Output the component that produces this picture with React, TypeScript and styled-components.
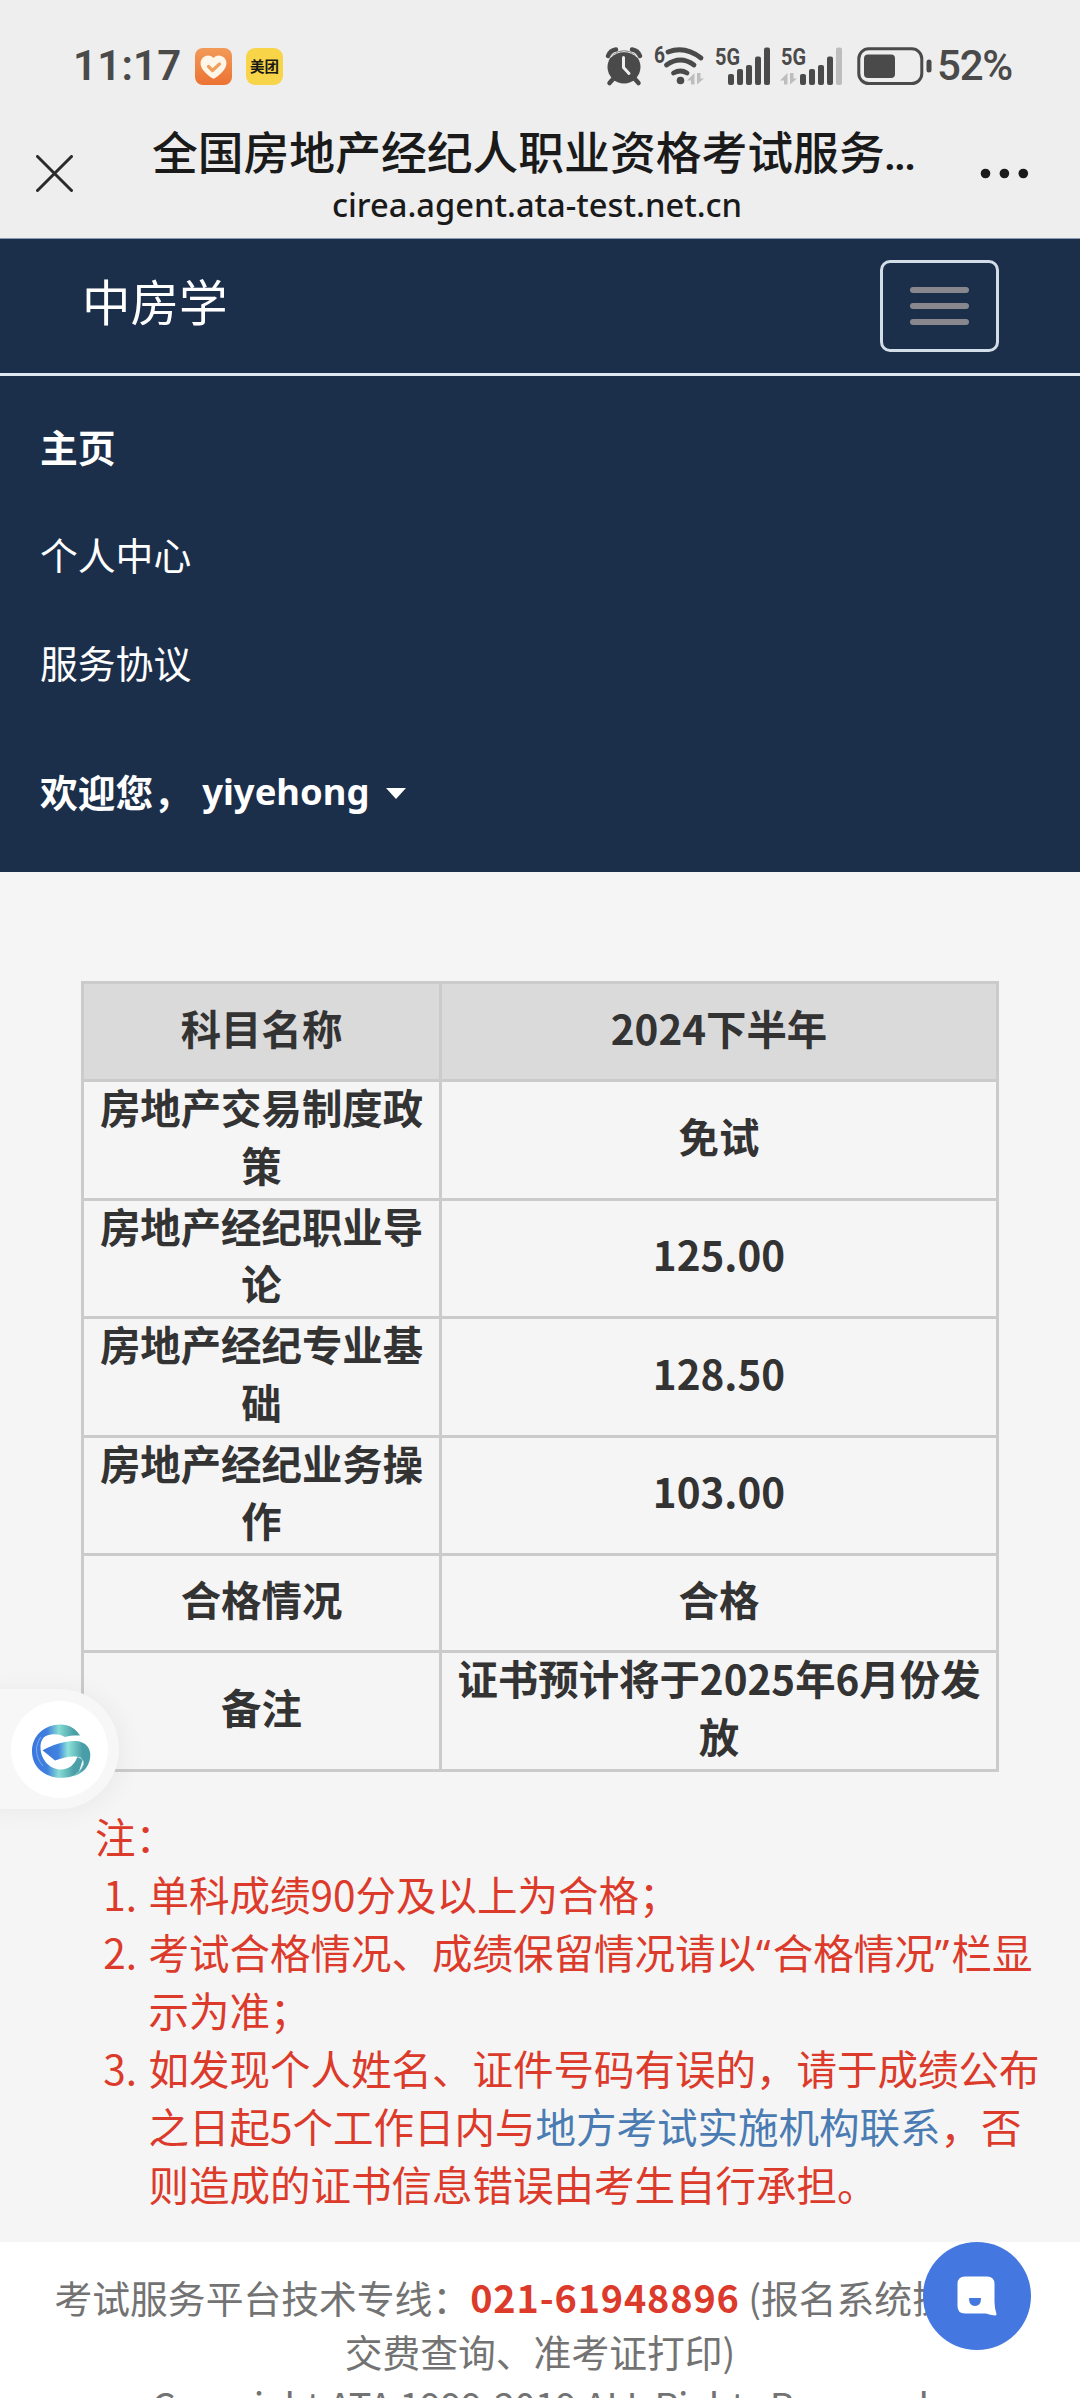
import React from "react";
import styled, { createGlobalStyle } from "styled-components";

const ink = "#4a4a4a";
const faint = "#bdbdbd";
const navy = "#1b2e4a";
const line = "#cbcbcb";
const red = "#dc3a2a";

const GlobalStyle = createGlobalStyle`
  html, body { margin: 0; padding: 0; background: #ffffff; }
  *, *::before, *::after { box-sizing: border-box; }
  body { overflow: hidden; }
`;

const Screen = styled.div`
  position: relative;
  width: 1080px;
  height: 2398px;
  overflow: hidden;
  display: flex;
  flex-direction: column;
  background: #f5f5f5;
  font-family: "Noto Sans CJK SC", "Noto Sans", sans-serif;
  color: #333333;
`;

const StatusBar = styled.div`
  flex: none;
  display: flex;
  align-items: center;
  height: 132px;
  padding: 0 66px 0 73px;
  background: #eeeeee;
  color: ${ink};
`;

const Clock = styled.span`
  width: 122px;
  font-family: Roboto, sans-serif;
  font-size: 42px;
  font-weight: 600;
  line-height: 60px;
  letter-spacing: 0.2px;
  white-space: nowrap;
`;

const NoticeIcons = styled.div`
  display: flex;
  gap: 14px;
  flex: 1;
`;

const Meituan = styled.span`
  width: 37px;
  height: 37px;
  border-radius: 9px;
  background: #f7d448;
  color: #1a1a14;
  font-size: 14.5px;
  font-weight: 700;
  line-height: 35px;
  text-align: center;
  white-space: nowrap;
`;

const Indicators = styled.div`
  display: flex;
  align-items: center;
`;

const IndicatorSvg = styled.svg<{ $gap?: number }>`
  display: block;
  flex: none;
  overflow: visible;
  margin-right: ${(p) => p.$gap ?? 0}px;
`;

const SmallLabel = styled.text`
  font-family: Roboto, sans-serif;
  font-weight: 700;
  fill: ${ink};
`;

const Battery = styled.span`
  width: 77px;
  font-family: Roboto, sans-serif;
  font-size: 42px;
  font-weight: 500;
  line-height: 60px;
  letter-spacing: -1.2px;
  white-space: nowrap;
`;

const TitleBar = styled.header`
  flex: none;
  display: flex;
  height: 107px;
  padding: 0 51px 0 36px;
  background: #eeeeee;
  border-bottom: 1px solid #8b9ab3;
`;

const BarButton = styled.button`
  flex: none;
  display: block;
  height: 37px;
  margin: 23px 0 0;
  padding: 0;
  border: 0;
  background: none;
`;

const Titles = styled.div`
  flex: 1;
  display: flex;
  flex-direction: column;
  align-items: center;
  padding-left: 14px;
  color: #1a1a1a;
  white-space: nowrap;
`;

const PageTitle = styled.h1`
  margin: -15px 0 0;
  font-size: 45.8px;
  font-weight: 500;
  line-height: 66px;
`;

const Ellipsis = styled.span`
  font-family: "Noto Sans", sans-serif;
  font-size: 36px;
  font-weight: 700;
`;

const PageUrl = styled.div`
  margin: -7px 0 0 7px;
  font-family: "Noto Sans", sans-serif;
  font-size: 32.7px;
  font-weight: 500;
  line-height: 44px;
`;

const NavHead = styled.div`
  flex: none;
  display: flex;
  align-items: center;
  justify-content: space-between;
  height: 137px;
  padding: 0 81px 0 82px;
  background: ${navy};
  border-bottom: 3px solid #dfe8ee;
`;

const Brand = styled.div`
  font-size: 48.5px;
  line-height: 60px;
  color: #ffffff;
  margin-top: -12px;
`;

const Toggle = styled.button`
  display: flex;
  flex-direction: column;
  align-items: center;
  justify-content: center;
  gap: 10px;
  width: 119px;
  height: 92px;
  padding: 0;
  border: 3px solid #d3dde7;
  border-radius: 10px;
  background: transparent;
`;

const ToggleBar = styled.span`
  width: 59px;
  height: 6px;
  border-radius: 3px;
  background: #88878e;
`;

const Menu = styled.nav`
  flex: none;
  display: flex;
  flex-direction: column;
  height: 496px;
  padding: 42px 40px 0;
  background: ${navy};
  color: #ffffff;
`;

const MenuItem = styled.a<{ $strong?: boolean; $top?: number }>`
  display: flex;
  align-items: center;
  height: 56px;
  margin: ${(p) => p.$top ?? 0}px 0 0;
  font-size: 37.8px;
  font-weight: ${(p) => (p.$strong ? 700 : 400)};
  line-height: 56px;
  white-space: pre;
`;

const UserName = styled.span`
  margin-left: 11px;
  width: 184px;
  font-family: "Noto Sans", sans-serif;
  font-size: 36.4px;
`;

const Caret = styled.span`
  border: 10.5px solid transparent;
  border-top: 11px solid #ffffff;
  border-bottom: 0;
  margin-top: 5px;
`;

const Content = styled.main`
  flex: none;
  height: 1370px;
  padding: 109px 0 0 81px;
`;

const ScoreTable = styled.table`
  width: 918px;
  border-collapse: collapse;
  table-layout: fixed;
  font-size: 40.4px;
  font-weight: 700;
  line-height: 57.7px;
  text-align: center;
`;

const Row = styled.tr<{ $h: number; $head?: boolean }>`
  height: ${(p) => p.$h}px;
  background: ${(p) => (p.$head ? "#dadada" : "transparent")};
`;

const Cell = styled.td<{ $w?: number }>`
  ${(p) => (p.$w ? `width: ${p.$w}px;` : "")}
  padding: 0;
  border: 3px solid ${line};
  vertical-align: middle;
`;

const CellText = styled.div`
  margin: -4px 0 4px;
`;

const Notes = styled.section`
  padding: 35px 0 0 14px;
  color: ${red};
  font-size: 40.5px;
  line-height: 58px;
`;

const NoteRow = styled.div`
  display: flex;
  white-space: nowrap;
`;

const NoteNumber = styled.span`
  width: 42px;
  margin-right: 11.5px;
  text-align: right;
`;

const NoteBody = styled.div`
  display: flex;
  flex-direction: column;
`;

const Quote = styled.span`
  font-family: "Noto Sans", sans-serif;
  line-height: 0;
  letter-spacing: 2.2px;
`;

const NoteLink = styled.a`
  color: #4a7cb3;
`;

const Footer = styled.footer`
  flex: 1;
  min-height: 0;
  padding-top: 28px;
  background: #ffffff;
  color: #737373;
  font-size: 37.8px;
  line-height: 54px;
  text-align: center;
  white-space: nowrap;
  overflow: hidden;
`;

const Hotline = styled.strong`
  color: ${red};
  font-weight: 700;
  letter-spacing: 0.85px;
`;

const Copyright = styled.div`
  letter-spacing: -0.5px;
`;

const Dock = styled.div`
  position: absolute;
  left: -20px;
  top: 1689px;
  width: 139px;
  height: 120px;
  border-radius: 0 60px 60px 0;
  background: #f7f7f7;
  box-shadow: 4px 2px 26px rgba(0, 0, 0, 0.05);
  display: flex;
  align-items: center;
  justify-content: flex-end;
  padding-right: 11px;
`;

const DockDisc = styled.div`
  width: 97px;
  height: 97px;
  border-radius: 50%;
  background: #ffffff;
  display: flex;
  align-items: center;
  justify-content: center;
  padding: 3px 0 0 2px;
`;

const ChatButton = styled.button`
  position: absolute;
  left: 923px;
  top: 2242px;
  width: 108px;
  height: 108px;
  padding: 0;
  border: 0;
  border-radius: 50%;
  background: #4478e0;
`;

const HeartIcon = () => (
  <svg width="37" height="37" viewBox="0 0 37 37">
    <defs>
      <linearGradient id="heartBg" x1="0" y1="0" x2="0" y2="1">
        <stop offset="0" stopColor="#f29a58" />
        <stop offset="1" stopColor="#ec7233" />
      </linearGradient>
    </defs>
    <rect width="37" height="37" rx="8" fill="url(#heartBg)" />
    <path
      d="M18.500 10 C15.500 6.500 10.500 6.800 7.500 10 C4.500 13.500 5.200 18.500 8.500 22.500 C11.500 26 14.500 28.500 17 30 Q18.500 31 20 30 C22.500 28.500 25.500 26 28.500 22.500 C31.800 18.500 32.500 13.500 29.500 10 C26.500 6.800 21.500 6.500 18.500 10 Z"
      fill="#fff6ea"
    />
    <path d="M13.500 18.500 L17.500 22.500 L24.500 16" fill="none" stroke="#f0a05e" strokeWidth="3.200" strokeLinecap="round" strokeLinejoin="round" />
  </svg>
);

const AlarmIcon = () => (
  <IndicatorSvg $gap={12} width="36" height="38" viewBox="0 0 36 38">
    <circle cx="18" cy="20" r="16.500" fill={ink} />
    <path d="M2 9 Q4 3.500 10 2.500 M34 9 Q32 3.500 26 2.500" fill="none" stroke={ink} strokeWidth="4.500" strokeLinecap="round" />
    <path d="M4.500 10.500 A18.500 18.500 0 0 1 31.500 10.500" fill="none" stroke="#eeeeee" strokeWidth="1" />
    <path d="M7.500 31.500 L3.500 36 M28.500 31.500 L32.500 36" stroke={ink} strokeWidth="4.500" strokeLinecap="round" />
    <path d="M17.500 10.500 V20.500 L23 26.500" fill="none" stroke="#eeeeee" strokeWidth="3" strokeLinecap="round" strokeLinejoin="round" />
  </IndicatorSvg>
);

const DataArrows = ({ x, y }: { x: number; y: number }) => (
  <path
    transform={`translate(${x} ${y})`}
    d="M7.500 0 V11.500 H4 V7.500 H0 Z M10 0 V11.500 L17 5.500 H13.500 V0 Z"
    fill={faint}
  />
);

const WifiIcon = () => (
  <IndicatorSvg $gap={11} width="50" height="38" viewBox="0 0 50 38">
    <SmallLabel x="0" y="15.500" fontSize="23" textLength="11" lengthAdjust="spacingAndGlyphs">6</SmallLabel>
    <g fill="none" stroke={ink} strokeWidth="4.800" strokeLinecap="round">
      <path d="M14 5 Q31 -1.500 47 11" />
      <path d="M12.500 18 Q26.500 8 40 18" />
      <path d="M19.500 26 Q26.500 22 33 26" />
    </g>
    <circle cx="26.500" cy="33.500" r="3.800" fill={ink} />
    <DataArrows x={33} y={26} />
  </IndicatorSvg>
);

const SignalIcon = ({ shift, weak, gap }: { shift: number; weak?: boolean; gap: number }) => (
  <IndicatorSvg $gap={gap} width={56 + shift} height="38" viewBox={`0 0 ${56 + shift} 38`}>
    <SmallLabel x="0" y="17.500" fontSize="24" textLength="25" lengthAdjust="spacingAndGlyphs">5G</SmallLabel>
    {weak && <DataArrows x={-1} y={26} />}
    {[27, 22, 18, 9.5, 0.5].map((top, i) => (
      <rect key={top} x={13 + shift + i * 9} y={top} width="6" height={38 - top} rx="2" fill={weak && i === 4 ? faint : ink} />
    ))}
  </IndicatorSvg>
);

const BatteryIcon = () => (
  <IndicatorSvg $gap={5} width="75" height="38" viewBox="0 0 75 38">
    <rect x="1.800" y="1.800" width="63" height="34.800" rx="10" fill="none" stroke={ink} strokeWidth="3" />
    <rect x="7" y="7.500" width="31" height="23.500" rx="4" fill={ink} />
    <rect x="69.500" y="12.500" width="5" height="13" rx="2.500" fill={ink} />
  </IndicatorSvg>
);

const GLogo = () => (
  <svg width="60" height="56" viewBox="0 0 60 56">
    <defs>
      <linearGradient id="gRing" gradientUnits="userSpaceOnUse" x1="1" y1="0" x2="59" y2="0">
        <stop offset="0" stopColor="#3b76df" />
        <stop offset="0.260" stopColor="#3f80de" />
        <stop offset="0.460" stopColor="#86dcd4" />
        <stop offset="0.720" stopColor="#4b9fa8" />
        <stop offset="1" stopColor="#4a9fa9" />
      </linearGradient>
      <linearGradient id="gBand" gradientUnits="userSpaceOnUse" x1="11" y1="0" x2="59" y2="0">
        <stop offset="0" stopColor="#3b70dc" />
        <stop offset="0.340" stopColor="#3f84df" />
        <stop offset="0.540" stopColor="#8fe3db" />
        <stop offset="0.850" stopColor="#489da7" />
      </linearGradient>
    </defs>
    <path
      d="M49 12.500 C44 5 38 1.500 29.500 1.500 C13 1.500 1 13 1 28.500 C1 44 14 54.800 29.700 54.800 C37 54.800 43 53.500 47.500 50 L52 36 L46.300 34 C44 41 38 46.500 30 46.500 C19 46.500 9.500 37 9.500 24 C9.500 17 13 12 20 11.500 C26 11 29 11.500 34 14 C39 12.500 44 12.200 49 12.500 Z"
      fill="url(#gRing)"
    />
    <path
      d="M11.500 27.300 C19 23.500 27 20 34 19 C40 18 46 17.500 50 19 C56 21 59.300 26 59.300 32 C59.300 42 53 50 43 53 C49 48 53 43 52.500 39 C52 34.500 48 33.500 43 33.500 C36 33.500 30 35.500 24 37.500 Z"
      fill="url(#gBand)"
    />
    <path d="M46 34 C55 36 55 44 43 53" fill="none" stroke="#8fd6d3" strokeWidth="0.800" />
    <path d="M10 14 C3.500 22 4 34 12 43" fill="none" stroke="#9cc4f0" strokeWidth="0.700" />
  </svg>
);

const scores: [string[], string[], number][] = [
  [["房地产交易制度政", "策"], ["免试"], 118.5],
  [["房地产经纪职业导", "论"], ["125.00"], 118.5],
  [["房地产经纪专业基", "础"], ["128.50"], 118.5],
  [["房地产经纪业务操", "作"], ["103.00"], 118.5],
  [["合格情况"], ["合格"], 97],
  [["备注"], ["证书预计将于2025年6月份发", "放"], 118.5],
];

const Lines = ({ of }: { of: string[] }) => (
  <CellText>
    {of.map((t) => (
      <div key={t}>{t}</div>
    ))}
  </CellText>
);

export default function App() {
  return (
    <Screen lang="zh-CN">
      <GlobalStyle />
      <StatusBar>
        <Clock>11:17</Clock>
        <NoticeIcons>
          <HeartIcon />
          <Meituan>美团</Meituan>
        </NoticeIcons>
        <Indicators>
          <AlarmIcon />
          <WifiIcon />
          <SignalIcon shift={0} gap={10} />
          <SignalIcon shift={6} weak gap={14} />
          <BatteryIcon />
          <Battery>52%</Battery>
        </Indicators>
      </StatusBar>
      <TitleBar>
        <BarButton aria-label="关闭">
          <svg width="37" height="37" viewBox="0 0 37 37">
            <path d="M1.500 1.500 L35.500 35.500 M35.500 1.500 L1.500 35.500" stroke="#2a2a2a" strokeWidth="3" strokeLinecap="round" />
          </svg>
        </BarButton>
        <Titles>
          <PageTitle>
            全国房地产经纪人职业资格考试服务<Ellipsis>...</Ellipsis>
          </PageTitle>
          <PageUrl>cirea.agent.ata-test.net.cn</PageUrl>
        </Titles>
        <BarButton aria-label="更多">
          <svg width="49" height="37" viewBox="0 0 49 37">
            <circle cx="5.500" cy="18.500" r="4.800" fill="#1a1a1a" />
            <circle cx="24.400" cy="18.500" r="4.800" fill="#1a1a1a" />
            <circle cx="43.300" cy="18.500" r="4.800" fill="#1a1a1a" />
          </svg>
        </BarButton>
      </TitleBar>
      <NavHead>
        <Brand>中房学</Brand>
        <Toggle aria-label="菜单">
          <ToggleBar />
          <ToggleBar />
          <ToggleBar />
        </Toggle>
      </NavHead>
      <Menu>
        <MenuItem $strong>主页</MenuItem>
        <MenuItem $top={51.5}>个人中心</MenuItem>
        <MenuItem $top={52}>服务协议</MenuItem>
        <MenuItem $strong $top={73.5}>
          欢迎您，<UserName>yiyehong</UserName>
          <Caret />
        </MenuItem>
      </Menu>
      <Content>
        <ScoreTable>
          <tbody>
            <Row $h={98} $head>
              <Cell $w={358}>
                <Lines of={["科目名称"]} />
              </Cell>
              <Cell>
                <Lines of={["2024下半年"]} />
              </Cell>
            </Row>
            {scores.map(([name, value, h]) => (
              <Row key={name[0]} $h={h}>
                <Cell>
                  <Lines of={name} />
                </Cell>
                <Cell>
                  <Lines of={value} />
                </Cell>
              </Row>
            ))}
          </tbody>
        </ScoreTable>
        <Notes>
          <div>注：</div>
          <NoteRow>
            <NoteNumber>1.</NoteNumber>
            <NoteBody>
              <div>单科成绩90分及以上为合格；</div>
            </NoteBody>
          </NoteRow>
          <NoteRow>
            <NoteNumber>2.</NoteNumber>
            <NoteBody>
              <div>
                考试合格情况、成绩保留情况请以<Quote>“</Quote>合格情况<Quote>”</Quote>栏显
              </div>
              <div>示为准；</div>
            </NoteBody>
          </NoteRow>
          <NoteRow>
            <NoteNumber>3.</NoteNumber>
            <NoteBody>
              <div>如发现个人姓名、证件号码有误的，请于成绩公布</div>
              <div>
                之日起5个工作日内与<NoteLink>地方考试实施机构联系</NoteLink>，否
              </div>
              <div>则造成的证书信息错误由考生自行承担。</div>
            </NoteBody>
          </NoteRow>
        </Notes>
      </Content>
      <Footer>
        <div>
          考试服务平台技术专线：<Hotline>021-61948896</Hotline> (报名系统操作、
        </div>
        <div>交费查询、准考证打印)</div>
        <Copyright>Copyright ATA 1999-2019 ALL Rights Reserved</Copyright>
      </Footer>
      <Dock>
        <DockDisc>
          <GLogo />
        </DockDisc>
      </Dock>
      <ChatButton aria-label="客服">
        <svg width="108" height="108" viewBox="0 0 108 108">
          <path
            d="M42 34.500 H64 Q71.500 34.500 71.500 42 V60 Q71.500 66 73.500 72 Q73.500 73.500 72 73.500 Q67 73 63 71.500 H42 Q34.500 71.500 34.500 64 V42 Q34.500 34.500 42 34.500 Z"
            fill="#ffffff"
          />
          <path d="M46 56 H58 Q58 64 52 64 Q46 64 46 56 Z" fill="#4478e0" />
        </svg>
      </ChatButton>
    </Screen>
  );
}
